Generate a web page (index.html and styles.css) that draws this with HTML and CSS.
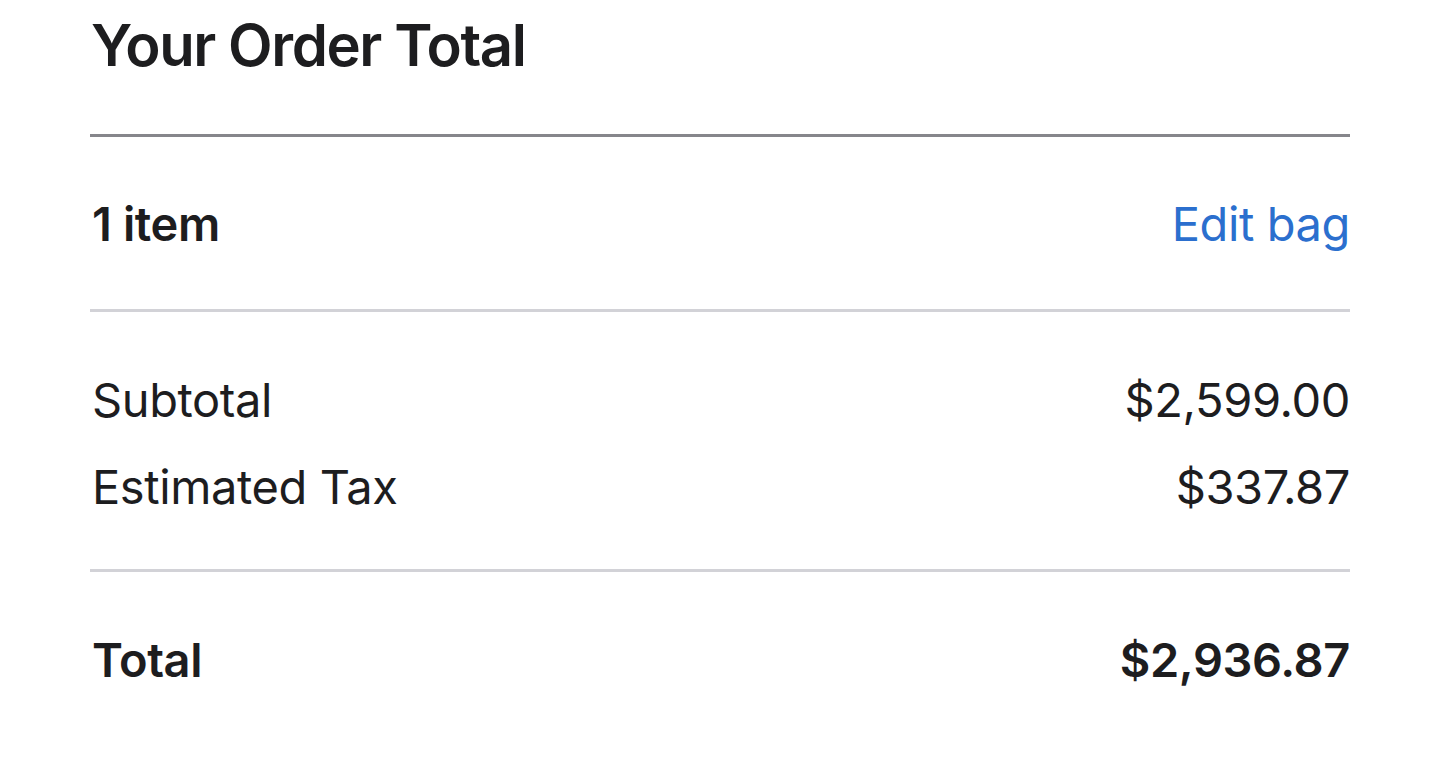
FILE: index.html
```html
<!DOCTYPE html>
<html lang="en">
<head>
<meta charset="utf-8">
<title>Your Order Total</title>
<link rel="stylesheet" href="styles.css">
</head>
<body>
<main class="summary">
  <h1 class="title">Your Order Total</h1>
  <div class="row row-items">
    <span class="strong">1 item</span>
    <a class="edit" href="#">Edit bag</a>
  </div>
  <div class="group">
    <div class="row row-line">
      <span>Subtotal</span>
      <span>$2,599.00</span>
    </div>
    <div class="row row-line">
      <span>Estimated Tax</span>
      <span>$337.87</span>
    </div>
  </div>
  <div class="row row-total">
    <span class="strong">Total</span>
    <span class="strong">$2,936.87</span>
  </div>
</main>
</body>
</html>
```
FILE: styles.css
```css
html, body {
  margin: 0;
  padding: 0;
  background: #ffffff;
}
body {
  font-family: Inter, "Noto Sans", "Liberation Sans", sans-serif;
  color: #1d1d1f;
}
.summary {
  width: 1260px;
  margin-left: 90px;
  display: flex;
  flex-direction: column;
}
.title {
  margin: 0;
  font-size: 58px;
  font-weight: 600;
  letter-spacing: -1.4px;
  line-height: 70px;
  padding: 10px 0 54px 1px;
  border-bottom: 3px solid #86868b;
}
.row {
  display: flex;
  justify-content: space-between;
  align-items: baseline;
  font-size: 47px;
  line-height: 58px;
  letter-spacing: -0.4px;
}
.strong {
  font-weight: 600;
}
.row > span:first-child {
  padding-left: 2px;
}
.row-items {
  padding: 58px 0 56px;
  border-bottom: 3px solid #d2d2d7;
}
.edit {
  color: #2b6fce;
  text-decoration: none;
}
.group {
  display: flex;
  flex-direction: column;
  gap: 29px;
  padding: 59px 0 53px;
  border-bottom: 3px solid #d2d2d7;
}
.row-total {
  padding: 59px 0;
}
```
